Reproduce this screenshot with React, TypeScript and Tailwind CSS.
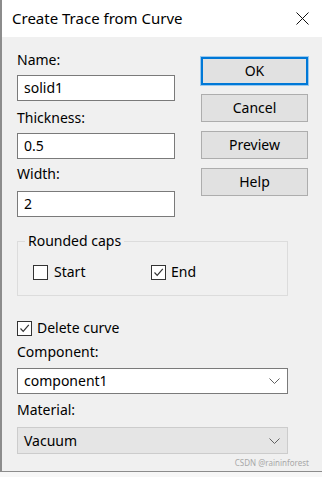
import React from 'react'

const font = { fontFamily: '"Noto Sans", "Liberation Sans", sans-serif' }

function Check({ checked }: { checked: boolean }) {
  return (
    <span className="flex h-[15px] w-[15px] shrink-0 items-center justify-center border border-[#333333] bg-white">
      {checked && (
        <svg width="11" height="11" viewBox="0 0 11 11" fill="none" stroke="#333333" strokeWidth="1.2">
          <polyline points="1.5,5.5 4.2,8.3 9.8,1.8" />
        </svg>
      )}
    </span>
  )
}

function Chevron() {
  return (
    <svg width="11" height="6" viewBox="0 0 11 6" fill="none" stroke="#606060" strokeWidth="1">
      <polyline points="0.5,0.5 5.5,5.5 10.5,0.5" />
    </svg>
  )
}

function Field({ value }: { value: string }) {
  return (
    <div className="flex h-[26px] w-[158px] items-center border border-[#7a7a7a] bg-white pl-[6px] text-[14px] text-black">
      {value}
    </div>
  )
}

function Btn({ label, primary }: { label: string; primary?: boolean }) {
  return (
    <div
      className={`flex h-[28px] w-[107px] items-center justify-center bg-[#e1e1e1] text-[14px] text-black ${
        primary ? 'border-2 border-[#0078d7] outline outline-1 outline-[#99c9ef]' : 'border border-[#adadad]'
      }`}
    >
      {label}
    </div>
  )
}

export default function App() {
  return (
    <div className="h-[477px] w-[322px] overflow-hidden bg-[#f7f7f7]" style={font}>
      <div className="flex h-[472px] flex-col border-b border-l-2 border-[#8c8c8c]">
        {/* Title bar */}
        <div className="flex h-[37px] shrink-0 items-center justify-between bg-white pl-[10px] pr-[13px]">
          <span className="text-[15px] text-black">Create Trace from Curve</span>
          <svg width="13" height="13" viewBox="0 0 13 13" stroke="#111111" strokeWidth="1">
            <line x1="0.5" y1="0.5" x2="12.5" y2="12.5" />
            <line x1="12.5" y1="0.5" x2="0.5" y2="12.5" />
          </svg>
        </div>

        {/* Body */}
        <div className="flex flex-1 flex-col bg-[#f0f0f0] pl-[15px] text-[14px] leading-[20px] text-black">
          <div className="flex">
            <div className="flex w-[158px] flex-col pt-[13px]">
              <div className="h-[20px]">Name:</div>
              <div className="mt-[5px]"><Field value="solid1" /></div>
              <div className="mt-[7px] h-[20px]">Thickness:</div>
              <div className="mt-[5px]"><Field value="0.5" /></div>
              <div className="mt-[5px] h-[20px]">Width:</div>
              <div className="mt-[7px]"><Field value="2" /></div>
            </div>
            <div className="ml-[26px] flex flex-col gap-[9px] pt-[20px]">
              <Btn label="OK" primary />
              <Btn label="Cancel" />
              <Btn label="Preview" />
              <Btn label="Help" />
            </div>
          </div>

          <fieldset className="mt-[14px] w-[271px] border border-[#dcdcdc] pb-[13px]">
            <legend className="ml-[7px] px-[3px] leading-[20px]">Rounded caps</legend>
            <div className="mt-[11px] flex h-[20px] items-center pl-[15px]">
              <div className="flex w-[118px] items-center gap-[6px]">
                <Check checked={false} />
                <span>Start</span>
              </div>
              <div className="flex items-center gap-[5px]">
                <Check checked />
                <span>End</span>
              </div>
            </div>
          </fieldset>

          <div className="mt-[22px] flex h-[20px] items-center gap-[5px]">
            <Check checked />
            <span>Delete curve</span>
          </div>

          <div className="mt-[4px] h-[20px]">Component:</div>
          <div className="mt-[6px] flex h-[26px] w-[271px] items-center justify-between border border-[#7a7a7a] bg-white pl-[6px] pr-[7px]">
            <span>component1</span>
            <Chevron />
          </div>

          <div className="mt-[6px] h-[20px]">Material:</div>
          <div className="mt-[7px] flex h-[27px] w-[271px] items-center justify-between border border-[#cccccc] bg-[#e5e5e5] pl-[6px] pr-[7px]">
            <span>Vacuum</span>
            <Chevron />
          </div>

          <div className="mt-[4px] flex w-[292px] justify-end text-[8px] leading-[10px] text-[#a8a8a8]">
            CSDN @raininforest
          </div>
        </div>
      </div>
    </div>
  )
}
